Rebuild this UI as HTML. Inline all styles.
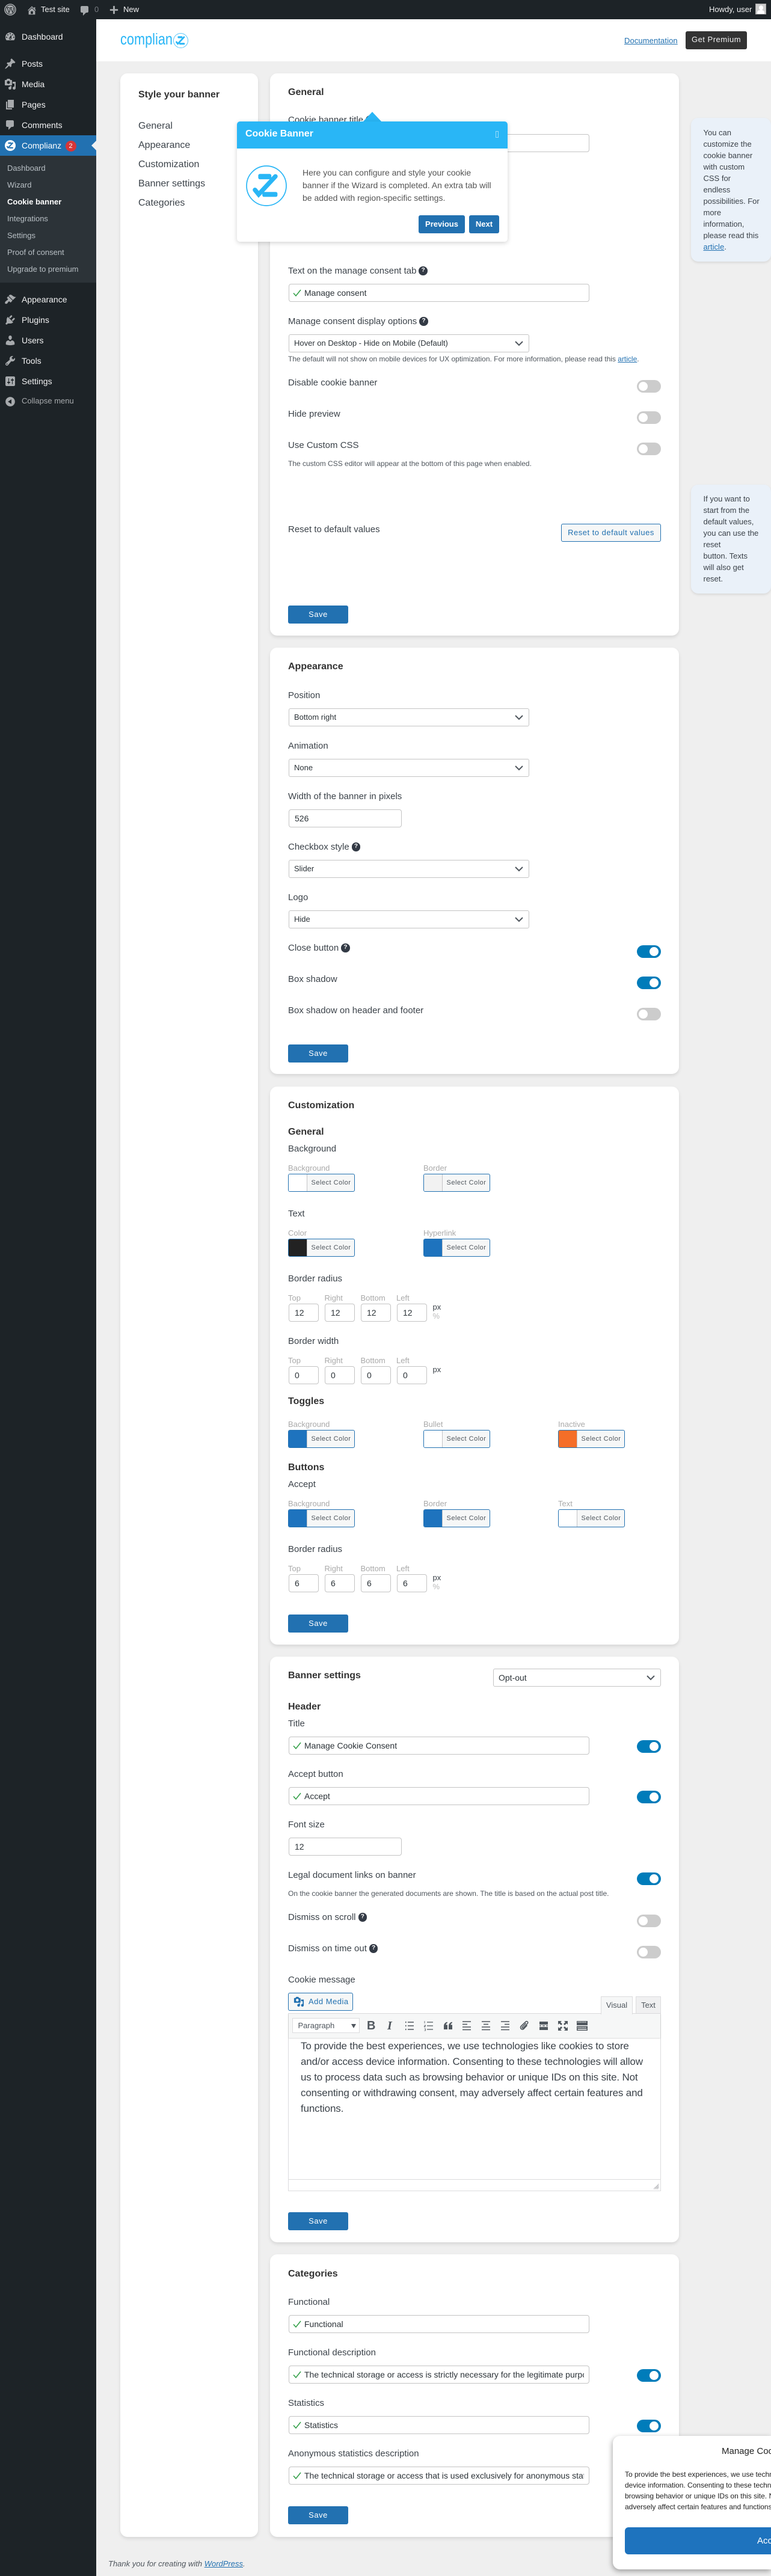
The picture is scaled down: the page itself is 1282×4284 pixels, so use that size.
<!DOCTYPE html>
<html><head><meta charset="utf-8"><title>Cookie banner</title>
<style>
*{box-sizing:border-box}
html,body{margin:0;padding:0}
body{width:1282px;height:4284px;position:relative;overflow:hidden;background:#efefef;font-family:"Liberation Sans",Arial,sans-serif;color:#3c434a}
div,span,a,svg{position:absolute}
span.n,a.n,i,u{position:static}
.bar{left:0;top:0;width:1282px;height:32px;background:#1d2327}
.bt{font-size:13px;line-height:32px;color:#f0f0f1;top:0;white-space:nowrap}
.side{left:0;top:32px;width:160px;height:4252px;background:#1d2327}
.m{left:36px;font-size:14px;line-height:20px;color:#f0f0f1;white-space:nowrap}
.sub{left:12px;font-size:13px;line-height:20px;color:rgba(240,246,252,.7);white-space:nowrap}
.ic{left:7px;width:20px;height:20px;fill:#a7aaad}
.head{left:160px;top:32px;width:1122px;height:70px;background:#fff}
.card{background:#fff;border-radius:12px;box-shadow:0 3px 6px rgba(0,0,0,.1)}
.hd{left:479px;margin-top:1px;font-size:16px;font-weight:700;line-height:20px;color:#333;white-space:nowrap}
.l{left:479px;font-size:15px;line-height:20px;color:#3c434a;white-space:nowrap}
.cm{left:479px;font-size:12px;line-height:16px;color:#50575e;white-space:nowrap}
.s{font-size:13px;line-height:16px;color:#aaa;white-space:nowrap}
.nav{left:230px;font-size:16px;line-height:20px;color:#3c434a;white-space:nowrap}
a{color:#2271b1;text-decoration:underline}
.h{display:inline-block;width:14.5px;height:14.5px;border-radius:50%;background:#333a45;color:#fff;font-style:normal;font-weight:700;font-size:10px;line-height:14.5px;text-align:center;vertical-align:3px;margin:-5px 0 -5px 4px}
.i{left:480px;width:500px;height:30px;border:1px solid #c4c4c4;border-radius:4px;background:#fff;font-size:14px;line-height:28px;color:#2c3338}
.i.w{width:188px;padding-left:9px}
.i.x{width:50px;padding-left:9px}
.i p{margin:0 8px 0 25px;overflow:hidden;white-space:nowrap;line-height:28px}
.i svg{left:6px;top:7px;width:14px;height:14px}
.sel{left:480px;width:400px;height:30px;border:1px solid #c4c4c4;border-radius:3px;background:#fff;font-size:13px;line-height:28px;padding-left:8px;color:#2c3338}
.sel svg{right:9px;top:10px;width:14px;height:9px}
.t{left:1059px;width:40px;height:21px;border-radius:11px;background:#ccc}
.t:after{content:"";position:absolute;left:3px;top:3px;width:15px;height:15px;border-radius:50%;background:#fff}
.t.on{background:#007cba}
.t.on:after{left:21px}
.btn{left:479px;width:100px;height:30px;border-radius:3px;background:#2271b1;color:#fff;font-size:13px;line-height:30px;letter-spacing:.5px;text-align:center}
.c{width:111px;height:30px;border:1px solid #2271b1;border-radius:3px;background:#f6f7f7;font-size:11px;letter-spacing:.5px;line-height:28px;color:#50575e;padding-left:37.5px;white-space:nowrap;overflow:hidden}
.c b{position:absolute;left:0;top:0;width:30.5px;height:28px;border-right:1px solid #c3c4c7}
.px{left:719.5px;font-size:13px;line-height:16px;color:#3c434a}
.pc{left:719.5px;font-size:13px;line-height:16px;color:#bbb}
.note{left:1149px;width:133px;background:#eaf1f9;border-radius:12px;box-shadow:0 2px 4px rgba(0,0,0,.1);font-size:13px;line-height:19px;color:#3c434a;padding-left:20.5px;white-space:nowrap}
.tb{top:3369px;width:20px;height:20px;margin-top:-10px;margin-left:-10px;fill:#50575e;stroke:#50575e}
</style></head><body>

<div class="bar"></div>
<svg style="left:7px;top:6px;width:20px;height:20px" viewBox="0 0 20 20"><circle cx="10" cy="10" r="9" fill="none" stroke="#a7aaad" stroke-width="1.6"/><circle cx="10" cy="10" r="7.2" fill="#a7aaad"/><path d="M4.2 6.6h3.8M4.9 6.6l3 8.6 2-5.6-1.2-3M9.7 6.6h3.6M10.9 6.6l3 8.4 1.6-5c.5-1.4-.3-2.4-.6-3.4" fill="none" stroke="#1d2327" stroke-width="1"/></svg>
<svg style="left:44px;top:8px;width:18px;height:18px;fill:#a7aaad" viewBox="0 0 20 20"><path d="M16 8.5l1.53 1.53-1.06 1.06L10 4.62l-6.47 6.47-1.06-1.06L10 2.5l4 4v-2h2v4zm-6-2.46l6 5.99V18H4v-5.97zM12 17v-5H8v5h4z"/></svg>
<div class="bt" style="left:68px">Test site</div>
<svg style="left:131px;top:8px;width:20px;height:20px;fill:#a7aaad" viewBox="0 0 20 20"><path d="M5 2h9c1.1 0 2 .9 2 2v7c0 1.1-.9 2-2 2h-2l-5 5v-5H5c-1.1 0-2-.9-2-2V4c0-1.1.9-2 2-2z"/></svg>
<div class="bt" style="left:157px;color:#787c82">0</div>
<svg style="left:180px;top:7px;width:19px;height:19px;fill:#a7aaad" viewBox="0 0 20 20"><path d="M17 8.5v3h-5.5V17h-3v-5.5H3v-3h5.5V3h3v5.5z"/></svg>
<div class="bt" style="left:205px">New</div>
<div class="bt" style="left:1179px">Howdy, user</div>
<div style="left:1256px;top:6px;width:18px;height:18px;background:#ccc;border:1px solid #aaa;overflow:hidden"><div style="left:4.5px;top:2px;width:7px;height:8px;border-radius:50%;background:#fff"></div><div style="left:2px;top:10px;width:12px;height:8px;border-radius:4px 4px 0 0;background:#fff"></div></div>

<div class="side"></div>
<svg class="ic" style="top:51px" viewBox="0 0 20 20"><path d="M3.76 16h12.48c1.1-1.37 1.76-3.11 1.76-5 0-4.42-3.58-8-8-8s-8 3.58-8 8c0 1.89.66 3.63 1.76 5zM10 4c.55 0 1 .45 1 1s-.45 1-1 1-1-.45-1-1 .45-1 1-1zM6 6c.55 0 1 .45 1 1s-.45 1-1 1-1-.45-1-1 .45-1 1-1zm8 0c.55 0 1 .45 1 1s-.45 1-1 1-1-.45-1-1 .45-1 1-1zm-5.37 5.55L12 7v6c0 1.1-.9 2-2 2s-2-.9-2-2c0-.57.24-1.08.63-1.45zM4 10c.55 0 1 .45 1 1s-.45 1-1 1-1-.45-1-1 .45-1 1-1zm12 0c.55 0 1 .45 1 1s-.45 1-1 1-1-.45-1-1 .45-1 1-1zm-5 3c0-.55-.45-1-1-1s-1 .45-1 1 .45 1 1 1 1-.45 1-1z"/></svg>
<div class="m" style="top:51px">Dashboard</div>
<svg class="ic" style="top:96px" viewBox="0 0 20 20"><path d="M10.44 3.02l1.82-1.82 6.36 6.35-1.83 1.82c-1.05-.68-2.48-.57-3.41.36l-.75.75c-.92.93-1.04 2.35-.35 3.41l-1.83 1.82-2.41-2.41-2.8 2.79c-.42.42-3.38 2.71-3.8 2.29s1.86-3.39 2.28-3.81l2.79-2.79L4.1 9.36l1.83-1.82c1.05.69 2.48.57 3.4-.36l.75-.75c.93-.92 1.05-2.35.36-3.41z"/></svg>
<div class="m" style="top:96px">Posts</div>
<svg class="ic" style="top:130px" viewBox="0 0 20 20"><path d="M13 11V4c0-.55-.45-1-1-1h-1.67L9 1H5L3.67 3H2c-.55 0-1 .45-1 1v7c0 .55.45 1 1 1h10c.55 0 1-.45 1-1zM7 4.5c1.38 0 2.5 1.12 2.5 2.5S8.38 9.5 7 9.5 4.5 8.38 4.5 7 5.62 4.5 7 4.5zM14 6h5v10.5c0 1.38-1.12 2.5-2.5 2.5S14 17.88 14 16.5s1.12-2.5 2.5-2.5c.17 0 .34.02.5.05V9h-3V6zm-4 8.05V13h2v3.5c0 1.38-1.12 2.5-2.5 2.5S7 17.88 7 16.5 8.12 14 9.5 14c.17 0 .34.02.5.05z"/></svg>
<div class="m" style="top:130px">Media</div>
<svg class="ic" style="top:164px" viewBox="0 0 20 20"><path d="M6 15V2h10v13H6zm-1 1h8v2H3V5h2v11z"/></svg>
<div class="m" style="top:164px">Pages</div>
<svg class="ic" style="top:198px" viewBox="0 0 20 20"><path d="M5 2h9c1.1 0 2 .9 2 2v7c0 1.1-.9 2-2 2h-2l-5 5v-5H5c-1.1 0-2-.9-2-2V4c0-1.1.9-2 2-2z"/></svg>
<div class="m" style="top:198px">Comments</div>

<div style="left:0;top:225px;width:160px;height:34px;background:#2271b1"></div>
<svg style="left:8px;top:233px;width:18px;height:18px" viewBox="0 0 100 100"><circle cx="50" cy="50" r="50" fill="#fff"/><rect x="30" y="21" width="32" height="13" rx="4" fill="#2271b1"/><polyline points="22,60 31,71 72,27" fill="none" stroke="#2271b1" stroke-width="11" stroke-linecap="round"/><rect x="40" y="65" width="37" height="12" rx="4" fill="#2271b1"/></svg>
<div class="m" style="top:232px;color:#fff">Complianz</div>
<div style="left:108.5px;top:234px;width:18px;height:18px;border-radius:50%;background:#d63638;color:#fff;font-size:11px;line-height:18px;text-align:center">2</div>
<div style="left:152px;top:234px;width:0;height:0;border:8px solid transparent;border-right-color:#f0f0f1;border-left-width:0"></div>

<div style="left:0;top:259px;width:160px;height:211px;background:#2c3338"></div>
<div class="sub" style="top:270px">Dashboard</div>
<div class="sub" style="top:298px">Wizard</div>
<div class="sub" style="top:326px;color:#fff;font-weight:700">Cookie banner</div>
<div class="sub" style="top:354px">Integrations</div>
<div class="sub" style="top:382px">Settings</div>
<div class="sub" style="top:410px">Proof of consent</div>
<div class="sub" style="top:438px">Upgrade to premium</div>

<svg class="ic" style="top:488px" viewBox="0 0 20 20"><path d="M14.48 11.06L7.41 3.99l1.5-1.5c.5-.56 2.3-.47 3.51.32 1.21.8 1.43 1.28 2.91 2.1 1.18.64 2.45 1.26 4.45.85zm-.71.71L6.7 4.7 4.93 6.47c-.39.39-.39 1.02 0 1.41l1.06 1.06c.39.39.39 1.03 0 1.42-.6.6-1.43 1.11-2.21 1.69-.35.26-.7.53-1.01.84C1.43 13.71.99 15.52 1.4 16.6c.41.48 2.28 1.18 3.47.14.31-.31.59-.65.85-1.01.58-.78 1.09-1.61 1.69-2.21.39-.39 1.02-.39 1.41 0l1.06 1.06c.39.39 1.02.39 1.41 0z"/></svg>
<div class="m" style="top:488px">Appearance</div>
<svg class="ic" style="top:522px" viewBox="0 0 20 20"><path d="M13.11 4.36L9.87 7.6 8 5.73l3.24-3.24c.35-.34 1.05-.2 1.56.32.52.51.66 1.21.31 1.55zm-8 1.77l.91-1.12 9.01 9.01-1.19.84c-.71.71-2.63 1.16-3.82 1.16H6.14L4.9 17.26c-.59.59-1.54.59-2.12 0-.59-.58-.59-1.53 0-2.12l1.24-1.24v-3.88c0-1.13.4-3.19 1.09-3.89zm7.26 3.97l3.24-3.24c.34-.35 1.04-.21 1.55.31.52.51.66 1.21.31 1.55l-3.24 3.25z"/></svg>
<div class="m" style="top:522px">Plugins</div>
<svg class="ic" style="top:556px" viewBox="0 0 20 20"><path d="M10 9.25c-2.27 0-2.73-3.44-2.73-3.44C7 4.02 7.82 2 9.97 2c2.16 0 2.98 2.02 2.71 3.81 0 0-.41 3.44-2.68 3.44zm0 2.57L12.72 10c2.39 0 4.52 2.33 4.52 4.53v2.49s-3.65 1.13-7.24 1.13c-3.65 0-7.24-1.13-7.24-1.13v-2.49c0-2.25 1.94-4.48 4.47-4.48z"/></svg>
<div class="m" style="top:556px">Users</div>
<svg class="ic" style="top:590px" viewBox="0 0 20 20"><path d="M16.68 9.77c-1.34 1.34-3.3 1.67-4.95.99l-5.41 6.52c-.99.99-2.59.99-3.58 0s-.99-2.59 0-3.57l6.52-5.42c-.68-1.65-.35-3.61.99-4.95 1.28-1.28 3.12-1.62 4.72-1.06l-2.89 2.89 2.82 2.82 2.86-2.87c.53 1.58.18 3.39-1.08 4.65zM3.81 16.21c.4.39 1.04.39 1.43 0 .4-.4.4-1.04 0-1.43-.39-.4-1.03-.4-1.43 0-.39.39-.39 1.03 0 1.43z"/></svg>
<div class="m" style="top:590px">Tools</div>
<svg class="ic" style="top:624px" viewBox="0 0 20 20"><path d="M18 16V4c0-1.1-.9-2-2-2H4c-1.1 0-2 .9-2 2v12c0 1.1.9 2 2 2h12c1.1 0 2-.9 2-2zM8 11h1c.55 0 1 .45 1 1s-.45 1-1 1H8v1.5c0 .28-.22.5-.5.5s-.5-.22-.5-.5V13H6c-.55 0-1-.45-1-1s.45-1 1-1h1V5.5c0-.28.22-.5.5-.5s.5.22.5.5V11zm5-2h-1c-.55 0-1-.45-1-1s.45-1 1-1h1V5.5c0-.28.22-.5.5-.5s.5.22.5.5V7h1c.55 0 1 .45 1 1s-.45 1-1 1h-1v5.5c0 .28-.22.5-.5.5s-.5-.22-.5-.5V9z"/></svg>
<div class="m" style="top:624px">Settings</div>
<svg class="ic" style="top:658px" viewBox="0 0 20 20"><path d="M10 2.16c4.33 0 7.84 3.51 7.84 7.84s-3.51 7.84-7.84 7.84S2.16 14.33 2.16 10 5.71 2.16 10 2.16zm2 11.72V6.12L6.18 9.97z"/></svg>
<div class="m" style="top:657px;font-size:13px;color:#a7aaad">Collapse menu</div>

<div class="head"></div>
<svg style="left:200px;top:55px;width:114px;height:26px" viewBox="0 0 114 26"><text x="0" y="19" font-family="Liberation Sans,sans-serif" font-size="27" fill="#29b6f6" textLength="87" lengthAdjust="spacingAndGlyphs">complian</text><g transform="translate(88,0) scale(.25)"><circle cx="50" cy="50" r="48" fill="#fff" stroke="#29b6f6" stroke-width="3"/><rect x="30" y="21" width="32" height="13" rx="4" fill="#29b6f6"/><polyline points="22,60 31,71 72,27" fill="none" stroke="#29b6f6" stroke-width="11" stroke-linecap="round"/><rect x="40" y="65" width="37" height="12" rx="4" fill="#29b6f6"/></g></svg>
<a style="left:1038px;top:58px;font-size:13px;line-height:20px;letter-spacing:.1px">Documentation</a>
<div style="left:1140px;top:52px;width:102px;height:30px;background:#333;border-radius:3px;color:#f0f0f1;font-size:13px;letter-spacing:.5px;line-height:28px;text-align:center">Get Premium</div>

<!-- left card -->
<div class="card" style="left:200px;top:122px;width:229px;height:4097px"></div>
<div class="hd" style="left:230px;top:147px">Style your banner</div>
<div class="nav" style="top:200px">General</div>
<div class="nav" style="top:232px">Appearance</div>
<div class="nav" style="top:264px">Customization</div>
<div class="nav" style="top:296px">Banner settings</div>
<div class="nav" style="top:328px">Categories</div>

<!-- General -->
<div class="card" style="left:449px;top:122px;width:680px;height:935px"></div>
<div class="hd" style="top:143px">General</div>
<div class="l" style="top:190px">Cookie banner title<i class="h">?</i></div>
<div class="i" style="top:223px"></div>
<div class="l" style="top:441px">Text on the manage consent tab<i class="h">?</i></div>
<div class="i" style="top:472px"><svg viewBox="0 0 14 14"><path d="M1 7.5l4 4.5 8-10" fill="none" stroke="#2f9e44" stroke-width="1.5"/></svg><p>Manage consent</p></div>
<div class="l" style="top:525px">Manage consent display options<i class="h">?</i></div>
<div class="sel" style="top:556px">Hover on Desktop - Hide on Mobile (Default)<svg viewBox="0 0 14 9"><path d="M1 1l6 6 6-6" fill="none" stroke="#50575e" stroke-width="2"/></svg></div>
<div class="cm" style="top:589px">The default will not show on mobile devices for UX optimization. For more information, please read this <a class="n">article</a>.</div>
<div class="l" style="top:627px">Disable cookie banner</div><div class="t" style="top:632px"></div>
<div class="l" style="top:679px">Hide preview</div><div class="t" style="top:684px"></div>
<div class="l" style="top:731px">Use Custom CSS</div><div class="t" style="top:736px"></div>
<div class="cm" style="top:763px">The custom CSS editor will appear at the bottom of this page when enabled.</div>
<div class="l" style="top:871px">Reset to default values</div>
<div style="left:933px;top:871px;width:166px;height:30px;border:1px solid #2271b1;border-radius:3px;background:#f6f7f7;color:#2271b1;font-size:13px;letter-spacing:.5px;line-height:28px;text-align:center;white-space:nowrap">Reset to default values</div>
<div class="btn" style="top:1007px">Save</div>

<div class="note" style="top:196px;height:239px;padding-top:15px">You can<br>customize the<br>cookie banner<br>with custom<br>CSS for<br>endless<br>possibilities. For<br>more<br>information,<br>please read this<br><a class="n">article</a>.</div>
<div class="note" style="top:806px;height:181px;padding-top:14px">If you want to<br>start from the<br>default values,<br>you can use the<br>reset<br>button. Texts<br>will also get<br>reset.</div>

<!-- Appearance -->
<div class="card" style="left:449px;top:1077px;width:680px;height:709px"></div>
<div class="hd" style="top:1098px">Appearance</div>
<div class="l" style="top:1147px">Position</div>
<div class="sel" style="top:1178px">Bottom right<svg viewBox="0 0 14 9"><path d="M1 1l6 6 6-6" fill="none" stroke="#50575e" stroke-width="2"/></svg></div>
<div class="l" style="top:1231px">Animation</div>
<div class="sel" style="top:1262px">None<svg viewBox="0 0 14 9"><path d="M1 1l6 6 6-6" fill="none" stroke="#50575e" stroke-width="2"/></svg></div>
<div class="l" style="top:1315px">Width of the banner in pixels</div>
<div class="i w" style="top:1346px">526</div>
<div class="l" style="top:1399px">Checkbox style<i class="h">?</i></div>
<div class="sel" style="top:1430px">Slider<svg viewBox="0 0 14 9"><path d="M1 1l6 6 6-6" fill="none" stroke="#50575e" stroke-width="2"/></svg></div>
<div class="l" style="top:1483px">Logo</div>
<div class="sel" style="top:1514px">Hide<svg viewBox="0 0 14 9"><path d="M1 1l6 6 6-6" fill="none" stroke="#50575e" stroke-width="2"/></svg></div>
<div class="l" style="top:1567px">Close button<i class="h">?</i></div><div class="t on" style="top:1572px"></div>
<div class="l" style="top:1619px">Box shadow</div><div class="t on" style="top:1624px"></div>
<div class="l" style="top:1671px">Box shadow on header and footer</div><div class="t" style="top:1676px"></div>
<div class="btn" style="top:1737px">Save</div>

<!-- Customization -->
<div class="card" style="left:449px;top:1807px;width:680px;height:928px"></div>
<div class="hd" style="top:1828px">Customization</div>
<div class="hd" style="top:1872px">General</div>
<div class="l" style="top:1901px">Background</div>
<div class="s" style="left:479px;top:1935px">Background</div>
<div class="s" style="left:704px;top:1935px">Border</div>
<div class="c" style="left:479px;top:1952px"><b style="background:#fff"></b>Select Color</div>
<div class="c" style="left:704px;top:1952px"><b style="background:#f2f2f2"></b>Select Color</div>
<div class="l" style="top:2009px">Text</div>
<div class="s" style="left:479px;top:2043px">Color</div>
<div class="s" style="left:704px;top:2043px">Hyperlink</div>
<div class="c" style="left:479px;top:2060px"><b style="background:#222"></b>Select Color</div>
<div class="c" style="left:704px;top:2060px"><b style="background:#1e73be"></b>Select Color</div>
<div class="l" style="top:2117px">Border radius</div>
<div class="s" style="left:479px;top:2151px">Top</div><div class="s" style="left:539.5px;top:2151px">Right</div><div class="s" style="left:599.5px;top:2151px">Bottom</div><div class="s" style="left:659px;top:2151px">Left</div>
<div class="i x" style="left:480px;top:2168px">12</div><div class="i x" style="left:540px;top:2168px">12</div><div class="i x" style="left:600px;top:2168px">12</div><div class="i x" style="left:660px;top:2168px">12</div>
<div class="px" style="top:2166px">px</div><div class="pc" style="top:2181px">%</div>
<div class="l" style="top:2221px">Border width</div>
<div class="s" style="left:479px;top:2255px">Top</div><div class="s" style="left:539.5px;top:2255px">Right</div><div class="s" style="left:599.5px;top:2255px">Bottom</div><div class="s" style="left:659px;top:2255px">Left</div>
<div class="i x" style="left:480px;top:2272px">0</div><div class="i x" style="left:540px;top:2272px">0</div><div class="i x" style="left:600px;top:2272px">0</div><div class="i x" style="left:660px;top:2272px">0</div>
<div class="px" style="top:2270px">px</div>
<div class="hd" style="top:2320px">Toggles</div>
<div class="s" style="left:479px;top:2361px">Background</div><div class="s" style="left:704px;top:2361px">Bullet</div><div class="s" style="left:928px;top:2361px">Inactive</div>
<div class="c" style="left:479px;top:2378px"><b style="background:#1e73be"></b>Select Color</div>
<div class="c" style="left:704px;top:2378px"><b style="background:#fff"></b>Select Color</div>
<div class="c" style="left:928px;top:2378px"><b style="background:#f56e28"></b>Select Color</div>
<div class="hd" style="top:2430px">Buttons</div>
<div class="l" style="top:2459px">Accept</div>
<div class="s" style="left:479px;top:2493px">Background</div><div class="s" style="left:704px;top:2493px">Border</div><div class="s" style="left:928px;top:2493px">Text</div>
<div class="c" style="left:479px;top:2510px"><b style="background:#1e73be"></b>Select Color</div>
<div class="c" style="left:704px;top:2510px"><b style="background:#1e73be"></b>Select Color</div>
<div class="c" style="left:928px;top:2510px"><b style="background:#fff"></b>Select Color</div>
<div class="l" style="top:2567px">Border radius</div>
<div class="s" style="left:479px;top:2601px">Top</div><div class="s" style="left:539.5px;top:2601px">Right</div><div class="s" style="left:599.5px;top:2601px">Bottom</div><div class="s" style="left:659px;top:2601px">Left</div>
<div class="i x" style="left:480px;top:2618px">6</div><div class="i x" style="left:540px;top:2618px">6</div><div class="i x" style="left:600px;top:2618px">6</div><div class="i x" style="left:660px;top:2618px">6</div>
<div class="px" style="top:2616px">px</div><div class="pc" style="top:2631px">%</div>
<div class="btn" style="top:2685px">Save</div>

<!-- Banner settings -->
<div class="card" style="left:449px;top:2755px;width:680px;height:974px"></div>
<div class="hd" style="top:2776px">Banner settings</div>
<div class="sel" style="left:820px;top:2775px;width:279px;font-size:14px">Opt-out<svg viewBox="0 0 14 9"><path d="M1 1l6 6 6-6" fill="none" stroke="#50575e" stroke-width="2"/></svg></div>
<div class="hd" style="top:2828px">Header</div>
<div class="l" style="top:2857px">Title</div>
<div class="i" style="top:2888px"><svg viewBox="0 0 14 14"><path d="M1 7.5l4 4.5 8-10" fill="none" stroke="#2f9e44" stroke-width="1.5"/></svg><p>Manage Cookie Consent</p></div><div class="t on" style="top:2894px"></div>
<div class="l" style="top:2941px">Accept button</div>
<div class="i" style="top:2972px"><svg viewBox="0 0 14 14"><path d="M1 7.5l4 4.5 8-10" fill="none" stroke="#2f9e44" stroke-width="1.5"/></svg><p>Accept</p></div><div class="t on" style="top:2978px"></div>
<div class="l" style="top:3025px">Font size</div>
<div class="i w" style="top:3056px">12</div>
<div class="l" style="top:3109px">Legal document links on banner</div><div class="t on" style="top:3114px"></div>
<div class="cm" style="top:3141px">On the cookie banner the generated documents are shown. The title is based on the actual post title.</div>
<div class="l" style="top:3179px">Dismiss on scroll<i class="h">?</i></div><div class="t" style="top:3184px"></div>
<div class="l" style="top:3231px">Dismiss on time out<i class="h">?</i></div><div class="t" style="top:3236px"></div>
<div class="l" style="top:3283px">Cookie message</div>
<div style="left:479px;top:3314px;width:107.5px;height:30px;border:1px solid #2271b1;border-radius:3px;background:#f6f7f7;color:#2271b1;font-size:13px;letter-spacing:.5px;line-height:28px;padding-left:33px;white-space:nowrap">Add Media<svg style="left:8px;top:5px;width:18px;height:18px;fill:#2271b1" viewBox="0 0 20 20"><path d="M13 11V4c0-.55-.45-1-1-1h-1.67L9 1H5L3.67 3H2c-.55 0-1 .45-1 1v7c0 .55.45 1 1 1h10c.55 0 1-.45 1-1zM7 4.5c1.38 0 2.5 1.12 2.5 2.5S8.38 9.5 7 9.5 4.5 8.38 4.5 7 5.62 4.5 7 4.5zM14 6h5v10.5c0 1.38-1.12 2.5-2.5 2.5S14 17.88 14 16.5s1.12-2.5 2.5-2.5c.17 0 .34.02.5.05V9h-3V6zm-4 8.05V13h2v3.5c0 1.38-1.12 2.5-2.5 2.5S7 17.88 7 16.5 8.12 14 9.5 14c.17 0 .34.02.5.05z"/></svg></div>
<div style="left:1057px;top:3320px;width:42px;height:29px;border:1px solid #dcdcde;background:#f0f0f1;color:#50575e;font-size:13px;line-height:27px;text-align:center">Text</div>
<div style="left:479px;top:3348px;width:620px;height:296px;border:1px solid #dcdcde;background:#fff"></div>
<div style="left:480px;top:3349px;width:618px;height:40px;background:#f6f7f7;box-shadow:0 1px 2px rgba(0,0,0,.15)"></div>
<div style="left:999px;top:3320px;width:53px;height:30px;border:1px solid #dcdcde;border-bottom:0;background:#f6f7f7;color:#50575e;font-size:13px;line-height:27px;text-align:center">Visual</div>
<div style="left:485.5px;top:3356px;width:112px;height:25px;border:1px solid #dcdcde;background:#fff;color:#50575e;font-size:13px;line-height:23px;padding-left:9px">Paragraph<div style="left:97px;top:9px;width:0;height:0;border:4px solid transparent;border-top:7px solid #50575e;border-bottom:0"></div></div>
<div style="left:610px;top:3357px;font-size:20px;line-height:24px;font-weight:700;color:#50575e">B</div>
<div style="left:644px;top:3357px;font-size:20px;line-height:24px;font-style:italic;font-family:'Liberation Serif',serif;font-weight:700;color:#50575e">I</div>
<svg class="tb" style="left:680.5px" viewBox="0 0 20 20" stroke-width="1.6"><path d="M7 4h10M7 10h10M7 16h10" fill="none"/><path d="M3 4h1.5M3 10h1.5M3 16h1.5" fill="none" stroke-width="2.2"/></svg>
<svg class="tb" style="left:712.5px" viewBox="0 0 20 20" stroke-width="1.3"><path d="M7 4h10M7 10h10M7 16h10" fill="none"/><path d="M3 2v4M2.5 9h2v1.5h-2V12h2M2.5 15h2v3h-2" fill="none" stroke-width=".8"/></svg>
<svg class="tb" style="left:744.5px;stroke:none" viewBox="0 0 20 20"><path d="M3 16V10.5C3 7 5 4.5 8.5 3.5L9 5.2C7.2 6 6.4 7 6.4 8.4H9V16zM11 16V10.5C11 7 13 4.5 16.5 3.5L17 5.2C15.2 6 14.4 7 14.4 8.4H17V16z"/></svg>
<svg class="tb" style="left:776px" viewBox="0 0 20 20" stroke-width="1.5"><path d="M3 3h14M3 7.5h8M3 12h14M3 16.5h14" fill="none"/></svg>
<svg class="tb" style="left:808px" viewBox="0 0 20 20" stroke-width="1.5"><path d="M3 3h14M6 7.5h8M3 12h14M3 16.5h14" fill="none"/></svg>
<svg class="tb" style="left:840px" viewBox="0 0 20 20" stroke-width="1.5"><path d="M3 3h14M9 7.5h8M3 12h14M3 16.5h14" fill="none"/></svg>
<svg class="tb" style="left:872px" viewBox="0 0 20 20" stroke-width="1.6"><path d="M12.5 5.5l-6 6.5c-1 1 .6 2.6 1.6 1.6l7-7.4c2-2-1-5-3-3L4.5 10.500c-3 3 1.500 7.500 4.500 4.500l5.500-5.800" fill="none"/></svg>
<svg class="tb" style="left:904px;stroke:none" viewBox="0 0 20 20"><path d="M3 3h14v5H3zM3 12h14v5H3zM3 9.300h3v1.400H3zM8 9.300h4v1.400H8zM14 9.300h3v1.400h-3z"/></svg>
<svg class="tb" style="left:936px;stroke:none" viewBox="0 0 20 20"><path d="M2 2h6L6 4l3 3-2 2-3-3-2 2zM18 2v6l-2-2-3 3-2-2 3-3-2-2zM2 18v-6l2 2 3-3 2 2-3 3 2 2zM18 18h-6l2-2-3-3 2-2 3 3 2-2z"/></svg>
<svg class="tb" style="left:968px;stroke:none" viewBox="0 0 20 20"><path d="M1 2h18v7H1zm1.500 1v1.500H4V3zm2.500 0v1.500h1.500V3zm2.500 0v1.500H9V3zm2.500 0v1.500h1.500V3zm2.500 0v1.500H14V3zm2.500 0v1.500h1.500V3zM1 10.500h18v7.500H1zm1.500 1.500v1.500H4V12zm2.500 0v1.500h1.500V12zm2.500 0v1.500H9V12zm2.500 0v1.500h1.500V12zm2.500 0v1.500H14V12zm2.500 0v1.500h1.500V12zM2.500 15v1.500h15V15z"/></svg>
<div style="left:500px;top:3390px;font-size:17px;line-height:26px;color:#3c434a;white-space:nowrap;letter-spacing:-.16px">To provide the best experiences, we use technologies like cookies to store<br>and/or access device information. Consenting to these technologies will allow<br>us to process data such as browsing behavior or unique IDs on this site. Not<br>consenting or withdrawing consent, may adversely affect certain features and<br>functions.</div>
<div style="left:480px;top:3624px;width:618px;height:1px;background:#dcdcde"></div>
<svg style="left:1086px;top:3631px;width:10px;height:10px" viewBox="0 0 10 10"><path d="M9 1v8M7 3v6M5 5v4M3 7v2M1 9h8M3 7h6M5 5h4M7 3h2" stroke="#8c8f94" stroke-width="1" stroke-dasharray="1 1" fill="none"/></svg>
<div class="btn" style="top:3679px">Save</div>

<!-- Categories -->
<div class="card" style="left:449px;top:3749px;width:680px;height:470px"></div>
<div class="hd" style="top:3771px">Categories</div>
<div class="l" style="top:3819px">Functional</div>
<div class="i" style="top:3850px"><svg viewBox="0 0 14 14"><path d="M1 7.500l4 4.500 8-10" fill="none" stroke="#2f9e44" stroke-width="1.500"/></svg><p>Functional</p></div>
<div class="l" style="top:3903px">Functional description</div>
<div class="i" style="top:3934px"><svg viewBox="0 0 14 14"><path d="M1 7.500l4 4.500 8-10" fill="none" stroke="#2f9e44" stroke-width="1.500"/></svg><p>The technical storage or access is strictly necessary for the legitimate purpose of enabling the use of a specific service</p></div><div class="t on" style="top:3940px"></div>
<div class="l" style="top:3987px">Statistics</div>
<div class="i" style="top:4018px"><svg viewBox="0 0 14 14"><path d="M1 7.500l4 4.500 8-10" fill="none" stroke="#2f9e44" stroke-width="1.500"/></svg><p>Statistics</p></div><div class="t on" style="top:4024px"></div>
<div class="l" style="top:4071px">Anonymous statistics description</div>
<div class="i" style="top:4102px"><svg viewBox="0 0 14 14"><path d="M1 7.500l4 4.500 8-10" fill="none" stroke="#2f9e44" stroke-width="1.500"/></svg><p>The technical storage or access that is used exclusively for anonymous statistical purposes</p></div>
<div class="btn" style="top:4168px">Save</div>

<div style="left:180px;top:4254px;font-size:13px;line-height:20px;font-style:italic;color:#50575e;white-space:nowrap">Thank you for creating with <a class="n">WordPress</a>.</div>

<!-- Preview banner (clipped at the viewport edge) -->
<div style="left:999px;top:4031px;width:283px;height:253px;overflow:hidden">
<div style="left:20px;top:20px;width:263px;height:222px;background:#fff;border-radius:12px 0 0 12px;box-shadow:-1px 3px 9px rgba(0,0,0,.35);overflow:hidden">
<div style="left:181px;top:16px;width:82px;overflow:hidden;font-size:15px;line-height:20px;color:#222;white-space:nowrap">Manage Cookie Consent</div>
<div style="left:20px;top:55px;width:243px;overflow:hidden;font-size:12px;line-height:18px;color:#222;white-space:nowrap">To provide the best experiences, we use technologies like cookies to store and/or access<br>device information. Consenting to these technologies will allow us to process data such as<br>browsing behavior or unique IDs on this site. Not consenting or withdrawing consent, may<br>adversely affect certain features and functions.</div>
<div style="left:20px;top:152px;width:243px;height:45px;background:#1e73be;border-radius:6px 0 0 6px;color:#fff;font-size:15px;line-height:45px;padding-left:220px;overflow:hidden;white-space:nowrap">Accept</div>
</div>
</div>

<!-- Tour popover -->
<svg style="left:603px;top:186px;width:32px;height:17px" viewBox="0 0 32 17"><path d="M0 17L16 0l16 17z" fill="#29b6f6"/></svg>
<div style="left:394px;top:202px;width:450px;height:200px;background:#fff;border-radius:5px;box-shadow:0 2px 8px rgba(0,0,0,.18)">
<div style="left:0;top:0;width:450px;height:45px;background:#29b6f6;border-radius:5px 5px 0 0"></div>
<div style="left:14px;top:11px;font-size:16px;font-weight:700;line-height:20px;color:#fff;white-space:nowrap">Cookie Banner</div>
<div style="left:429.500px;top:16px;width:5px;height:11px;border:1px solid #9adcfb"></div>
<svg style="left:15px;top:73px;width:68px;height:68px" viewBox="0 0 100 100"><circle cx="50" cy="50" r="48.500" fill="none" stroke="#29b6f6" stroke-width="2.500"/><rect x="30" y="21" width="32" height="13" rx="4" fill="#29b6f6"/><polyline points="22,60 31,71 72,27" fill="none" stroke="#29b6f6" stroke-width="11" stroke-linecap="round"/><rect x="40" y="65" width="37" height="12" rx="4" fill="#29b6f6"/></svg>
<div style="left:109px;top:74.500px;font-size:14px;line-height:21px;color:#555;white-space:nowrap">Here you can configure and style your cookie<br>banner if the Wizard is completed. An extra tab will<br>be added with region-specific settings.</div>
<div style="left:302px;top:156px;width:77px;height:30px;background:#2271b1;border-radius:3px;color:#fff;font-size:13px;font-weight:700;line-height:30px;text-align:center">Previous</div>
<div style="left:386px;top:156px;width:50px;height:30px;background:#2271b1;border-radius:3px;color:#fff;font-size:13px;font-weight:700;line-height:30px;text-align:center">Next</div>
</div>
</body></html>
